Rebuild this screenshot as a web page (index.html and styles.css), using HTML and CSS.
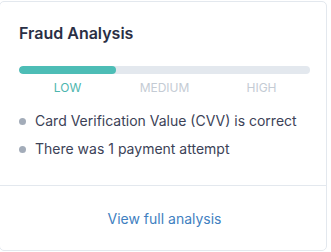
FILE: index.html
```html
<!DOCTYPE html>
<html>
<head>
<meta charset="utf-8">
<link rel="stylesheet" href="styles.css">
</head>
<body>
<div class="card">
  <div class="card-body">
    <h2 class="title">Fraud Analysis</h2>
    <div class="meter">
      <div class="meter-fill" style="width: 33.3%"></div>
    </div>
    <div class="levels">
      <span class="level level-active">LOW</span>
      <span class="level">MEDIUM</span>
      <span class="level">HIGH</span>
    </div>
    <ul class="checks">
      <li class="check"><span class="dot"></span>Card Verification Value (CVV) is correct</li>
      <li class="check"><span class="dot"></span>There was 1 payment attempt</li>
    </ul>
  </div>
  <div class="card-footer">
    <a class="link" href="#">View full analysis</a>
  </div>
</div>
</body>
</html>
```
FILE: styles.css
```css
* { box-sizing: border-box; }
html, body { margin: 0; padding: 0; background: #ffffff; }
body {
  font-family: Inter, "Noto Sans", "Liberation Sans", sans-serif;
  color: #3c4257;
}
.card {
  margin: 1px 0 0 -1px;
  width: 328px;
  height: 250px;
  border: 1px solid #e3e8ee;
  border-radius: 5px;
  background: #fff;
  display: flex;
  flex-direction: column;
}
.card-body {
  padding: 19px 16px 26px 19px;
  border-bottom: 1px solid #e3e8ee;
}
.title {
  margin: 0;
  font-size: 16px;
  line-height: 24px;
  font-weight: 600;
  color: #2a2f45;
}
.meter {
  margin-top: 21px;
  height: 8px;
  border-radius: 4px;
  background: #e3e8ee;
  overflow: hidden;
}
.meter-fill {
  height: 100%;
  border-radius: 4px;
  background: #4dbdb6;
}
.levels {
  margin-top: 6px;
  display: grid;
  grid-template-columns: 1fr 1fr 1fr;
}
.level {
  text-align: center;
  font-size: 12px;
  line-height: 16px;
  color: #c4cbd4;
}
.level-active { color: #4db6ae; }
.checks {
  list-style: none;
  margin: 15px 0 0;
  padding: 0;
  display: flex;
  flex-direction: column;
  gap: 8px;
}
.check {
  display: flex;
  align-items: center;
  gap: 9px;
  font-size: 14px;
  line-height: 20px;
  color: #3c4257;
}
.dot {
  width: 7px;
  height: 7px;
  border-radius: 50%;
  background: #a3acb9;
  flex: none;
}
.card-footer {
  flex: 1;
  padding: 22px 16px 0 19px;
  text-align: center;
}
.link {
  font-size: 14px;
  line-height: 20px;
  color: #3f7fc1;
  text-decoration: none;
}
```
